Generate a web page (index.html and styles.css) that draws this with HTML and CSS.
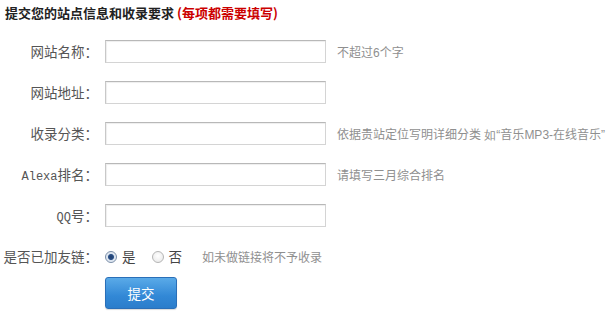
FILE: index.html
```html
<!DOCTYPE html>
<html lang="zh">
<head>
<meta charset="utf-8">
<link rel="stylesheet" href="styles.css">
</head>
<body>
<div class="page">
  <h1 class="title">提交您的站点信息和收录要求<span class="req">(每项都需要填写)</span></h1>
  <form class="form">
    <label class="label">网站名称：</label>
    <input class="field" type="text">
    <span class="hint">不超过<span class="num">6</span>个字</span>

    <label class="label">网站地址：</label>
    <input class="field" type="text">
    <span class="hint"></span>

    <label class="label">收录分类：</label>
    <input class="field" type="text">
    <span class="hint">依据贵站定位写明详细分类<span class="num"> 如“</span>音乐<span class="num">MP3-</span>在线音乐<span class="num">”</span></span>

    <label class="label"><span class="latin">Alexa</span>排名：</label>
    <input class="field" type="text">
    <span class="hint">请填写三月综合排名</span>

    <label class="label"><span class="latin">QQ</span>号：</label>
    <input class="field" type="text">
    <span class="hint"></span>

    <label class="label">是否已加友链：</label>
    <div class="radios">
      <span class="radio checked"></span><span class="opt">是</span>
      <span class="radio"></span><span class="opt">否</span>
      <span class="hint hint-radio">如未做链接将不予收录</span>
    </div>

    <span></span>
    <div class="actions"><button class="submit" type="button">提交</button></div>
  </form>
</div>
</body>
</html>
```

FILE: styles.css
```css
html, body {
  margin: 0;
  padding: 0;
  background: #fff;
}
body {
  font-family: "Noto Sans CJK SC", "Noto Sans", sans-serif;
  color: #555;
}
.page {
  width: 610px;
  height: 313px;
  overflow: hidden;
}
.title {
  margin: 0;
  padding: 5px 0 0 5px;
  font-size: 13px;
  line-height: 16px;
  font-weight: bold;
  color: #222;
}
.req {
  color: #c00;
  margin-left: 3px;
}
.form {
  display: grid;
  grid-template-columns: 105px 221px 1fr;
  grid-auto-rows: 23px;
  row-gap: 18px;
  margin-top: 19px;
}
.label {
  grid-column: 1;
  text-align: right;
  padding-right: 7px;
  font-size: 13.5px;
  line-height: 23px;
  color: #555;
  white-space: nowrap;
}
.latin {
  font-family: "Liberation Mono", monospace;
  font-size: 12px;
}
.field {
  grid-column: 2;
  margin: 0;
  box-sizing: border-box;
  width: 221px;
  height: 23px;
  border: 1px solid #d4d4d4;
  border-top-color: #b8b8b8;
  border-left-color: #c8c8c8;
  box-shadow: inset 1px 1px 1px #eee;
  background: #fff;
  padding: 0 4px;
  outline: none;
}
.hint {
  grid-column: 3;
  padding-left: 11px;
  font-size: 12px;
  line-height: 23px;
  color: #8f8f8f;
  white-space: nowrap;
}
.num {
  font-family: "Liberation Sans", sans-serif;
}
.radios {
  grid-column: 2 / 4;
  display: flex;
  align-items: center;
}
.radio {
  box-sizing: border-box;
  width: 12px;
  height: 12px;
  border-radius: 50%;
  border: 1px solid #b5b5b5;
  background: radial-gradient(circle at 50% 40%, #fff, #e6e6e6);
}
.radio.checked {
  border-color: #7a8ea8;
  background: radial-gradient(circle, #1f3f6e 0, #2a4f86 2.5px, #d8e2ee 3.5px, #eef2f7 6px);
}
.opt {
  font-size: 13.5px;
  line-height: 23px;
  color: #444;
  margin: 0 16px 0 5px;
}
.hint-radio {
  padding-left: 4px;
}
.actions {
  grid-column: 2;
  margin-top: -9px;
}
.submit {
  width: 72px;
  height: 32px;
  border: 1px solid #2a6fb8;
  border-radius: 3px;
  background: linear-gradient(#5aaae8, #3288d6 60%, #2b7dcb);
  color: #fff;
  font-family: "Noto Sans CJK SC", sans-serif;
  font-size: 13.5px;
  padding: 0;
  box-shadow: 0 1px 1px rgba(0,0,0,0.15);
}
```
